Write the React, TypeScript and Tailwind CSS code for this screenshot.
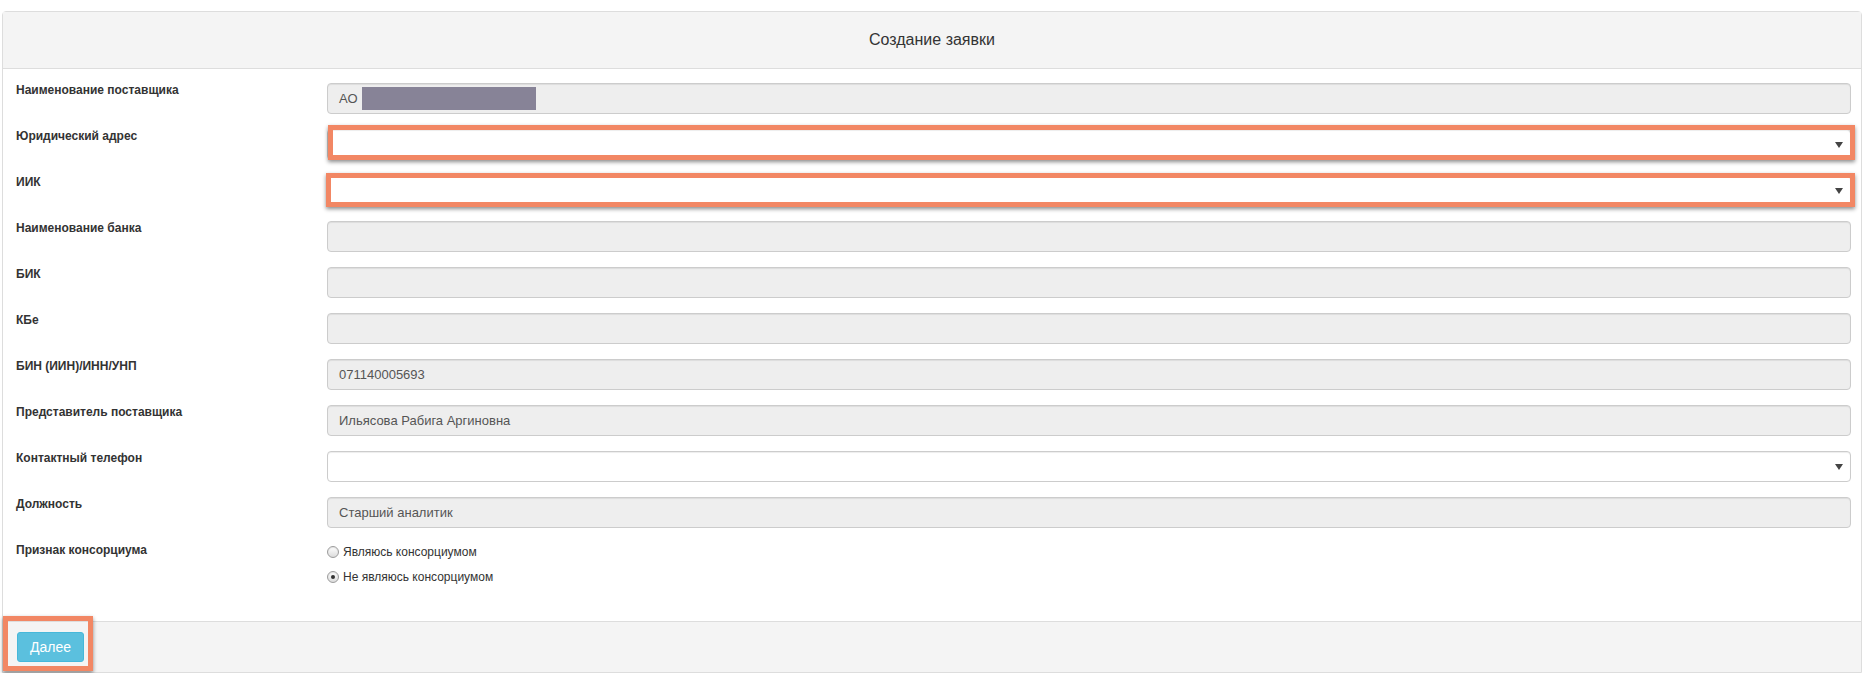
import React from "react";

type Field = {
  label: string;
  kind: "input" | "select";
  value?: string;
  redacted?: boolean;
  frame?: "a" | "b";
};

const fields: Field[] = [
  { label: "Наименование поставщика", kind: "input", value: "АО", redacted: true },
  { label: "Юридический адрес", kind: "select", frame: "a" },
  { label: "ИИК", kind: "select", frame: "b" },
  { label: "Наименование банка", kind: "input", value: "" },
  { label: "БИК", kind: "input", value: "" },
  { label: "КБе", kind: "input", value: "" },
  { label: "БИН (ИИН)/ИНН/УНП", kind: "input", value: "071140005693" },
  { label: "Представитель поставщика", kind: "input", value: "Ильясова Рабига Аргиновна" },
  { label: "Контактный телефон", kind: "select" },
  { label: "Должность", kind: "input", value: "Старший аналитик" },
];

function Arrow() {
  return (
    <svg width="8" height="6" viewBox="0 0 8 6" className="absolute right-[8px] top-[13px]">
      <polygon points="0,0 8,0 4,6" fill="#444" />
    </svg>
  );
}

function Control({ f }: { f: Field }) {
  if (f.kind === "select") {
    return (
      <div className="relative flex-1 h-[31px]">
        <div className="h-full w-full rounded-[4px] border border-[#ccc] bg-white shadow-[inset_0_1px_1px_rgba(0,0,0,0.075)]" />
        <Arrow />
        {f.frame === "a" && (
          <div className="absolute -top-[4px] bottom-0 left-[1px] -right-[4px] border-[5px] border-[#f28764] shadow-[0_2px_4px_rgba(0,0,0,0.45)]" />
        )}
        {f.frame === "b" && (
          <div className="absolute -top-[2px] -bottom-[1px] -left-[1px] -right-[4px] border-[5px] border-[#f28764] shadow-[0_2px_4px_rgba(0,0,0,0.45)]" />
        )}
      </div>
    );
  }
  return (
    <div className="flex-1 h-[31px] rounded-[4px] border border-[#ccc] bg-[#eee] shadow-[inset_0_1px_1px_rgba(0,0,0,0.075)] flex items-center pl-[11px] text-[13px] text-[#555]">
      <span>{f.value}</span>
      {f.redacted && <span className="ml-[4px] inline-block w-[174px] h-[23px] bg-[#878397]" />}
    </div>
  );
}

function Radio({ checked, label }: { checked?: boolean; label: string }) {
  return (
    <div className="h-[18px] flex items-center">
      <span className="w-[12px] h-[12px] rounded-full border border-[#9c9c9c] bg-gradient-to-b from-[#ffffff] to-[#dcdcdc] flex items-center justify-center shadow-[inset_0_1px_1px_rgba(0,0,0,0.1)]">
        {checked && <span className="w-[4px] h-[4px] rounded-full bg-[#333]" />}
      </span>
      <span className="ml-[4px] text-[12px] text-[#333]">{label}</span>
    </div>
  );
}

export default function App() {
  return (
    <div className="min-h-[673px] bg-white pt-[11px] px-[2px] font-['Liberation_Sans',Arial,sans-serif] text-[#333]">
      <div className="border border-[#ddd] rounded-t-[4px]">
        <div className="h-[57px] bg-[#f4f4f4] border-b border-[#ddd] flex items-center justify-center text-[16px] text-[#333]">
          Создание заявки
        </div>
        <div className="pt-[14px] pl-[13px] pr-[10px] pb-[35px]">
          {fields.map((f) => (
            <div key={f.label} className="flex items-start mb-[15px]">
              <label className="w-[311px] shrink-0 text-[12px] leading-[17px] font-bold text-[#333] -mt-px">
                {f.label}
              </label>
              <Control f={f} />
            </div>
          ))}
          <div className="flex items-start">
            <label className="w-[311px] shrink-0 text-[12px] leading-[17px] font-bold text-[#333] -mt-px">
              Признак консорциума
            </label>
            <div className="flex flex-col gap-[7px]">
              <Radio label="Являюсь консорциумом" />
              <Radio checked label="Не являюсь консорциумом" />
            </div>
          </div>
        </div>
        <div className="h-[51px] border-t border-[#ddd] bg-[#f4f4f4] pt-[10px] px-[14px]">
          <div className="relative inline-block">
            <button className="h-[30px] px-[12px] rounded-[3px] bg-[#5bc0de] border border-[#46b8da] text-white text-[14px]">
              Далее
            </button>
            <div className="absolute -top-[16px] -left-[14px] -right-[9px] -bottom-[9px] border-[5px] border-[#f28764] shadow-[0_2px_4px_rgba(0,0,0,0.45)]" />
          </div>
        </div>
      </div>
    </div>
  );
}
